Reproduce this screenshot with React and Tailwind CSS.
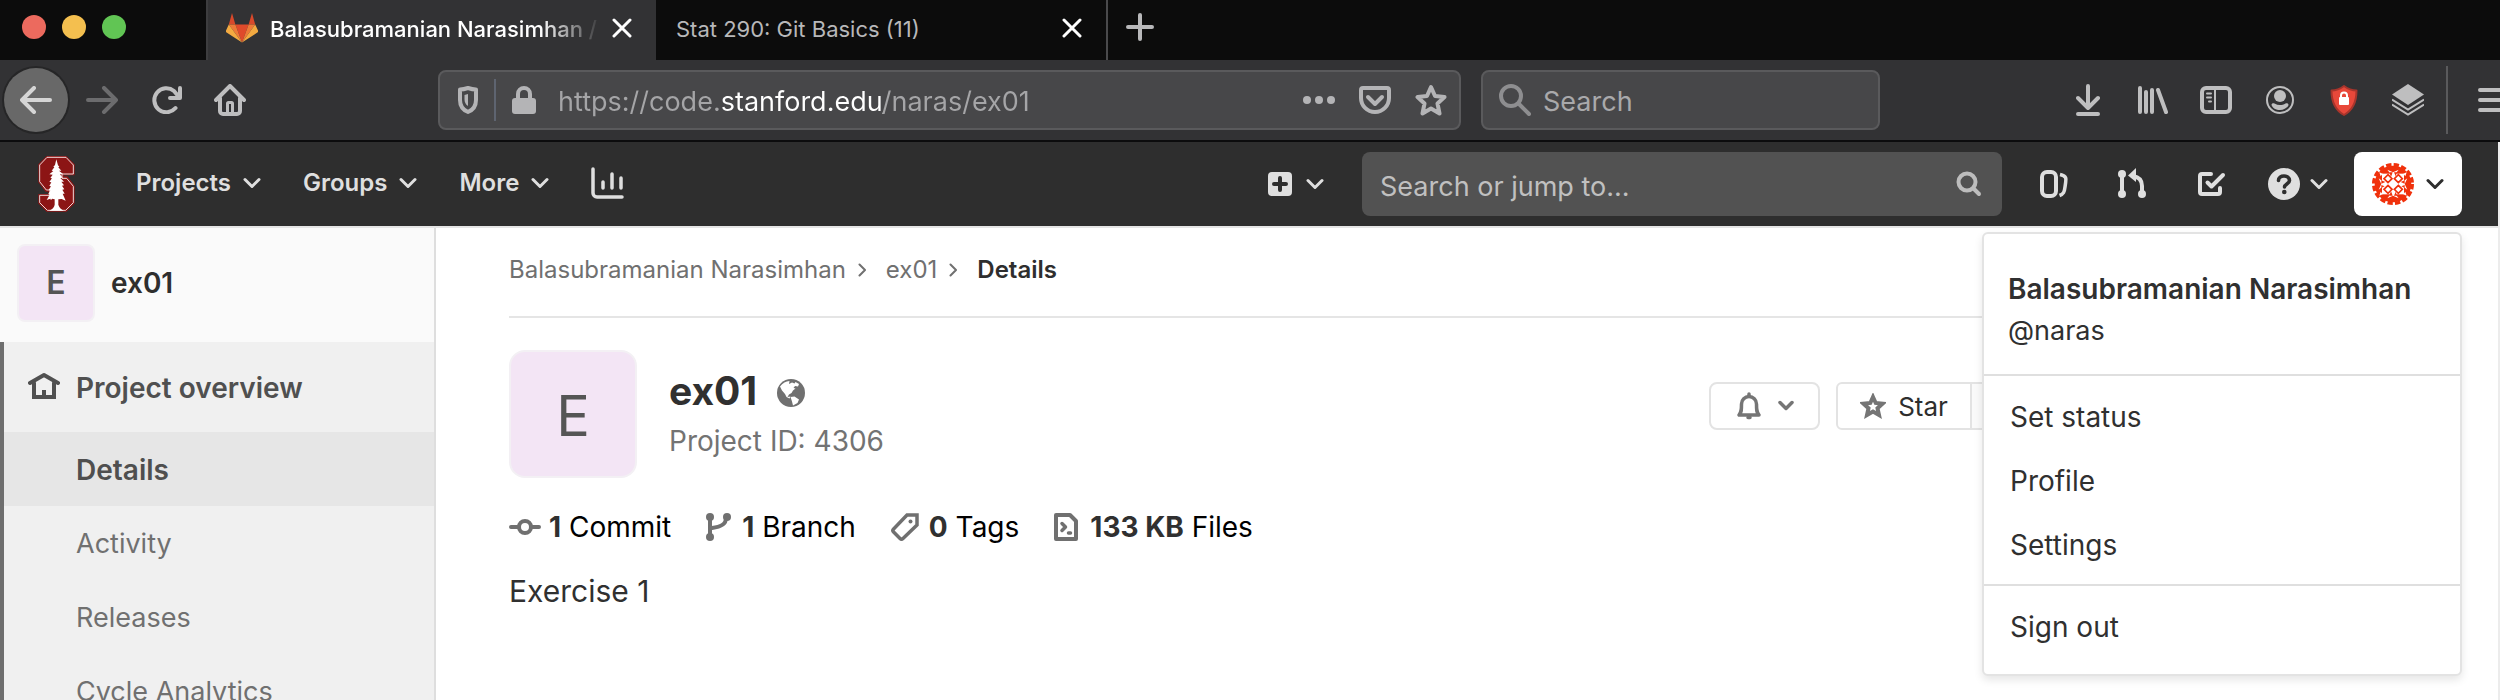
import { Fragment } from "react";

function Icon({ w = 32, h = 32, sw = 4, className = "", children }) {
  return (
    <svg
      width={w}
      height={h}
      viewBox={`0 0 ${w} ${h}`}
      fill="none"
      stroke="currentColor"
      strokeWidth={sw}
      strokeLinecap="round"
      strokeLinejoin="round"
      aria-hidden="true"
      className={`shrink-0 ${className}`}
    >
      {children}
    </svg>
  );
}

const Chevron = ({ className = "" }) => (
  <Icon w={18} h={12} sw={3} className={className}>
    <path d="M2 2.5 9 9.5 16 2.5" />
  </Icon>
);

const Close = () => (
  <Icon w={20} h={20} sw={3}>
    <path d="M2 2 18 18M18 2 2 18" />
  </Icon>
);

const Fox = () => (
  <Icon w={32} h={30} sw={0}>
    <path d="M6 0 2.8 11.5h6.6zM26 0l-3.4 11.5h6.6z" fill="#d8492b" />
    <path d="M9.4 11.5h13.2L16 29.5z" fill="#df4a2b" />
    <path d="M2.8 11.5h6.6L16 29.5zM29.2 11.5h-6.6L16 29.5z" fill="#ee7a38" />
    <path d="M2.8 11.5 0 17.6c-.2.8 0 1.6.6 2L16 29.5zM29.2 11.5l2.8 6.1c.2.8 0 1.6-.6 2L16 29.5z" fill="#f3aa41" />
  </Icon>
);

const StanfordLogo = () => (
  <svg width="37" height="56" viewBox="0 0 111 168" aria-hidden="true">
    <path
      d="M27 3H84L107 26V55H75V64H87L107 90V141L84 164H27L4 141V117H34V104H24L4 78V26Z"
      fill="#8c1515"
      stroke="#8c1515"
      strokeWidth="6"
    />
    <path
      d="M27 4H84L106 27V54H72V67H86L106 91V140L83 163H28L5 140V118H36V102H25L5 77V27Z"
      fill="#8c1515"
      stroke="#fff"
      strokeWidth="2.5"
    />
    <path
      d="M55 10 60 28 64 32 61 34 70 44 63 44 75 54 66 55 74 65 67 66 78 77 70 77 78 88 72 89 79 100 73 101 80 113 74 113 83 134 71 129 61 130 61 146C63 154 69 159 77 164H34C43 159 49 154 50 146L50 130 42 128 39 133 37 128 26 132 35 116 31 114 37 103 32 102 39 91 34 90 40 79 34 78 42 67 37 66 44 56 34 55 46 45 41 44 49 34 46 32 51 27Z"
      fill="#fff"
    />
  </svg>
);

const Avatar = () => (
  <svg width="42" height="42" viewBox="0 0 126 126" aria-hidden="true">
    <circle cx="63" cy="63" r="55" fill="#f0310c" />
    <circle cx="63" cy="63" r="58" fill="none" stroke="#f0310c" strokeWidth="10" strokeDasharray="16 6.8" />
    <path d="M30 32H96V94H30Z" fill="#fff" />
    <path d="M63 42 46 20l17 8 17-8zM63 84 46 106l17-8 17 8zM42 63 20 46l8 17-8 17zM84 63l22-17-8 17 8 17z" fill="#fff" />
    <path d="M22 28l4 12 6-8zM104 28l-4 12-6-8zM22 98l4-12 6 8zM104 98l-4-12-6 8z" fill="#fff" />
    <g fill="#fff" stroke="#f0310c" strokeWidth="5">
      <path d="M48 35 60 47 48 59 36 47zM79 35 91 47 79 59 67 47zM48 67 60 79 48 91 36 79zM79 67 91 79 79 91 67 79z" />
    </g>
    <path d="M52 28l5 14 5-14zM66 28l5 12 4-12zM52 98l5-14 5 14zM66 98l5-12 4 12zM28 52l12 5-12 5zM98 52l-12 5 12 5zM28 66l10 4-10 5zM98 66l-10 4 10 5z" fill="#f0310c" />
  </svg>
);

const toolbarIcons = [
  {
    label: "Downloads",
    gap: "",
    icon: (
      <Icon w={24} h={32}>
        <path d="M12 2V24M2 14 12 24 22 14M2 30H22" />
      </Icon>
    ),
  },
  {
    label: "Library",
    gap: "ml-[38px]",
    icon: (
      <Icon w={30} h={28}>
        <path d="M2 2V26M8 6V26M14 4V26M20 4 28 26" />
      </Icon>
    ),
  },
  {
    label: "Sidebars",
    gap: "ml-8",
    icon: (
      <Icon w={32} h={28}>
        <rect x="2" y="2" width="28" height="24" rx="4" />
        <path d="M15 3V25M7 7.500H11M7 11.500H11M9 15.500H11" strokeWidth="2" />
      </Icon>
    ),
  },
  {
    label: "Account",
    gap: "ml-[34px]",
    icon: (
      <Icon w={28} h={28} sw={2}>
        <circle cx="14" cy="14" r="13" />
        <circle cx="14" cy="10" r="6" fill="currentColor" stroke="none" />
        <path d="M5.500 19c0-1.500 1.500-2.200 3-1.500 3.500 2 7.500 2 11 0 1.500-.7 3 0 3 1.500-1 3-4.500 5-8.500 5s-7.500-2-8.500-5z" fill="currentColor" stroke="none" />
      </Icon>
    ),
  },
  {
    label: "Tracker protection",
    gap: "ml-9",
    icon: (
      <Icon w={28} h={32} sw={2}>
        <path d="M14 2C10 5 6 6.500 1.500 6.500 1.500 18 5 26 14 31 23 26 26.500 18 26.500 6.500 22 6.500 18 5 14 2Z" fill="#e8483a" stroke="#a8352c" />
        <rect x="9" y="13" width="10" height="8" rx="1" fill="#fff" stroke="none" />
        <path d="M11 13V11.500a3 3 0 0 1 6 0V13" stroke="#fff" />
      </Icon>
    ),
  },
  {
    label: "Layers",
    gap: "ml-[34px]",
    icon: (
      <Icon w={32} h={32} sw={0}>
        <path d="M16 0 32 10.500 16 21 0 10.500Z" fill="currentColor" />
        <path d="M0 15.500 16 25.500 32 15.500M0 20.500 16 30.500 32 20.500" strokeWidth="2" strokeLinecap="butt" strokeLinejoin="miter" />
      </Icon>
    ),
  },
];

const headerMenus = [
  { label: "Projects", gap: "ml-[61px]" },
  { label: "Groups", gap: "ml-[42px]" },
  { label: "More", gap: "ml-[42px]" },
];

const headerTools = [
  {
    label: "Issues",
    gap: "ml-[38px]",
    icon: (
      <Icon w={28} h={28}>
        <rect x="2" y="2" width="14" height="24" rx="5" />
        <path d="M20 4.500C27 6 26.500 8 25 17c-.6 5-1.500 7-5.500 8.500" strokeWidth="3.500" strokeLinecap="butt" />
      </Icon>
    ),
  },
  {
    label: "Merge requests",
    gap: "ml-[50px]",
    icon: (
      <Icon w={28} h={32}>
        <path d="M4 8V26M24 26V18C24 12 21 9 15 8" />
        <path d="M18 0V14L10 7.500Z" fill="currentColor" stroke="none" />
        <circle cx="4" cy="6" r="4" fill="currentColor" stroke="none" />
        <circle cx="4" cy="26" r="4" fill="currentColor" stroke="none" />
        <circle cx="24" cy="26" r="4" fill="currentColor" stroke="none" />
      </Icon>
    ),
  },
  {
    label: "To-Do List",
    gap: "ml-[52px]",
    icon: (
      <Icon w={28} h={24}>
        <path d="M13 2H4a2 2 0 0 0-2 2V20a2 2 0 0 0 2 2H20a2 2 0 0 0 2-2V16" />
        <path d="M9.500 10.500 13.500 14.500 25 3" />
      </Icon>
    ),
  },
];

const sidebarLinks = ["Details", "Activity", "Releases", "Cycle Analytics"];

const stats = [
  {
    count: "1",
    label: "Commit",
    icon: (
      <Icon w={32} h={20}>
        <path d="M2 10H9M23 10H30" />
        <circle cx="16" cy="10" r="6" />
      </Icon>
    ),
    gap: "gap-2",
  },
  {
    count: "1",
    label: "Branch",
    icon: (
      <Icon w={26} h={28}>
        <path d="M4 4V24M20 5C20 12 14 14 6 15" />
        <circle cx="4" cy="4" r="4" fill="currentColor" stroke="none" />
        <circle cx="4" cy="24" r="4" fill="currentColor" stroke="none" />
        <circle cx="21" cy="4" r="4" fill="currentColor" stroke="none" />
      </Icon>
    ),
    gap: "gap-2.5",
  },
  {
    count: "0",
    label: "Tags",
    icon: (
      <Icon w={28} h={28} sw={3.5}>
        <path d="M16 2H26V12L12 25.500C11 26.400 10 26.400 9 25.500L2.600 19C1.600 18 1.600 17 2.600 16Z" strokeLinejoin="miter" />
        <circle cx="19.500" cy="8.500" r="2" fill="currentColor" stroke="none" />
      </Icon>
    ),
    gap: "gap-2.5",
  },
  {
    count: "133 KB",
    label: "Files",
    icon: (
      <Icon w={24} h={28}>
        <path d="M2 2H16L22 8V26H2Z" />
        <path d="M8 10.500 11.500 14 8 17.500M14.500 20H16.500" strokeWidth="3.500" />
      </Icon>
    ),
    gap: "gap-3",
  },
];

function TabStrip() {
  return (
    <div className="flex h-15 items-stretch bg-[#0c0c0c]">
      <div className="flex w-[206px] shrink-0 items-start gap-4 pt-[15px] pl-[22px]">
        <button aria-label="Close window" className="size-6 rounded-full bg-[#ec6a5e]" />
        <button aria-label="Minimise window" className="size-6 rounded-full bg-[#f4bf4f]" />
        <button aria-label="Zoom window" className="size-6 rounded-full bg-[#61c554]" />
      </div>
      <div className="flex w-[450px] shrink-0 items-center border-l-2 border-[#3d3d3f] bg-[#323234] pr-6 pb-1 pl-[18px] text-white">
        <Fox />
        <span className="ml-3 flex-1 overflow-hidden pt-0.5 text-[22px] font-medium whitespace-nowrap [mask-image:linear-gradient(90deg,#000_270px,transparent_332px)]">
          Balasubramanian Narasimhan / ex01
        </span>
        <button aria-label="Close tab" className="ml-2">
          <Close />
        </button>
      </div>
      <div className="flex w-[452px] shrink-0 items-center border-r-2 border-[#4a4a4c] pr-6 pb-1 pl-5">
        <span className="flex-1 pt-0.5 text-[22px] text-[#b8b8ba]">Stat 290: Git Basics (11)</span>
        <button aria-label="Close tab" className="text-white">
          <Close />
        </button>
      </div>
      <button aria-label="New tab" className="ml-[18px] self-center pb-1.5 text-[#b8b8ba]">
        <Icon w={28} h={28}>
          <path d="M14 2V26M2 14H26" />
        </Icon>
      </button>
    </div>
  );
}

function NavBar() {
  return (
    <div className="flex h-[82px] items-center overflow-hidden border-b-2 border-[#0c0c0d] bg-[#323234] text-[#bebebf]">
      <button aria-label="Back" className="ml-1 grid size-16 shrink-0 place-items-center rounded-full bg-[#686868] text-[#d6d6d6] ring-2 ring-[#262627]">
        <Icon w={32} h={28}>
          <path d="M30 14H2M14 2 2 14 14 26" />
        </Icon>
      </button>
      <button aria-label="Forward" className="ml-[18px] text-[#6c6c6e]">
        <Icon w={32} h={28}>
          <path d="M2 14H30M18 2 30 14 18 26" />
        </Icon>
      </button>
      <button aria-label="Reload" className="ml-[34px]">
        <Icon w={30} h={28}>
          <path d="M23.500 22A12 12 0 1 1 22 5L27 11M28 2V12H18" />
        </Icon>
      </button>
      <button aria-label="Home" className="ml-8">
        <Icon w={32} h={32}>
          <path d="M2 16 16 2 30 16M6 14V27a3 3 0 0 0 3 3H23a3 3 0 0 0 3-3V14" />
          <path d="M13.500 28V19.500a1 1 0 0 1 1-1h3a1 1 0 0 1 1 1V28" strokeWidth="3" />
        </Icon>
      </button>

      <div className="ml-48 flex h-15 min-w-0 flex-1 items-center rounded-lg border-2 border-[#5a5a5c] bg-[#474749] pr-4 pl-[18px] text-[#b4b4b6]">
        <Icon w={20} h={28}>
          <path d="M10 2C7 3 4.500 3.500 2 3.500V14C2 20 5 24 10 26 15 24 18 20 18 14V3.500C15.500 3.500 13 3 10 2Z" />
          <path d="M10 8V20C7.500 18.500 6.500 16 6.500 13V9Z" fill="currentColor" stroke="none" />
        </Icon>
        <span className="mx-4 h-[42px] w-0.5 bg-[#5e6470]" />
        <Icon w={24} h={28}>
          <rect x="0" y="12" width="24" height="16" rx="3" fill="currentColor" stroke="none" />
          <path d="M6 13V8a6 6 0 0 1 12 0V13" />
        </Icon>
        <input
          aria-label="Address"
          type="text"
          defaultValue="https://code.stanford.edu/naras/ex01"
          className="ml-[22px] h-11 min-w-0 flex-1 bg-[linear-gradient(90deg,#a5a5a7_162px,#ffffff_162px,#ffffff_325px,#a5a5a7_325px)] bg-clip-text pt-0.5 text-[27px] text-transparent outline-none"
        />
        <button aria-label="Page actions">
          <Icon w={32} h={8} sw={0}>
            <g fill="currentColor">
              <circle cx="4" cy="4" r="4" />
              <circle cx="16" cy="4" r="4" />
              <circle cx="28" cy="4" r="4" />
            </g>
          </Icon>
        </button>
        <button aria-label="Save to Pocket" className="ml-6">
          <Icon w={32} h={28}>
            <path d="M4 2H28a2 2 0 0 1 2 2V12A14 14 0 0 1 2 12V4A2 2 0 0 1 4 2Z" />
            <path d="M9 11 16 18 23 11" />
          </Icon>
        </button>
        <button aria-label="Bookmark this page" className="ml-6 -mr-1">
          <Icon w={32} h={32}>
            <path d="M16 3 20 12 29.500 13 22.500 19.500 24.500 29.500 16 24.500 7.500 29.500 9.500 19.500 2.500 13 12 12Z" />
          </Icon>
        </button>
      </div>

      <label className="ml-5 flex h-15 w-[399px] shrink-0 items-center rounded-lg border-2 border-[#5a5a5c] bg-[#474749] px-4 text-[#8e8e90]">
        <Icon w={32} h={32}>
          <circle cx="12" cy="12" r="10" />
          <path d="M19.500 19.500 30 30" />
        </Icon>
        <input
          aria-label="Search the web"
          type="text"
          placeholder="Search"
          className="ml-3 h-11 min-w-0 flex-1 bg-transparent pt-0.5 text-[27px] outline-none placeholder:text-[#a9a9ab]"
        />
      </label>

      <div className="ml-[196px] flex shrink-0 items-center">
        {toolbarIcons.map((t) => (
          <button key={t.label} aria-label={t.label} className={t.gap}>
            {t.icon}
          </button>
        ))}
        <span className="ml-[22px] h-[68px] w-0.5 bg-[#5a5a5c]" />
        <button aria-label="Open menu" className="-mr-2.5 ml-[30px]">
          <Icon w={32} h={24}>
            <path d="M2 2H30M2 12H30M2 22H30" />
          </Icon>
        </button>
      </div>
    </div>
  );
}

function UserMenu() {
  return (
    <div className="absolute top-full right-0 z-10 mt-4 w-[480px] rounded-md border-2 border-[#e3e3e3] bg-white pb-4 text-[28px] text-[#303030] shadow-[0_4px_8px_rgba(0,0,0,0.1)]">
      <div className="border-b-2 border-[#dfdfdf] px-6 pt-[34px] pb-[22px] leading-[42px]">
        <p className="font-semibold whitespace-nowrap">Balasubramanian Narasimhan</p>
        <p className="text-[27px]">@naras</p>
      </div>
      <ul className="border-b-2 border-[#dfdfdf] py-2">
        {["Set status", "Profile", "Settings"].map((t) => (
          <li key={t}>
            <a href="#" className="block px-[26px] pt-0.5 leading-[62px]">{t}</a>
          </li>
        ))}
      </ul>
      <a href="#" className="mt-2 block px-[26px] pt-0.5 leading-[62px]">Sign out</a>
    </div>
  );
}

function SiteHeader() {
  return (
    <header className="flex h-[86px] shrink-0 items-center border-b-2 border-[#e5e5e5] bg-[#2e2e2e] pr-9 pl-[38px] text-[#dfdfdf]">
      <a href="#" aria-label="Dashboard">
        <StanfordLogo />
      </a>
      <nav className="flex items-center pb-0.5 text-2xl font-semibold">
        {headerMenus.map((m) => (
          <button key={m.label} className={`flex items-center gap-3 ${m.gap}`}>
            {m.label}
            <Chevron />
          </button>
        ))}
        <a href="#" aria-label="Charts" className="ml-[42px]">
          <Icon w={34} h={32} sw={3.5}>
            <path d="M2 2V26a4 4 0 0 0 4 4H31M12 15V21M21 7V21M30 11V21" />
          </Icon>
        </a>
      </nav>

      <button aria-label="New" className="ml-auto flex items-center gap-3.5">
        <svg width="24" height="24" viewBox="0 0 24 24" aria-hidden="true">
          <rect width="24" height="24" rx="4" fill="currentColor" />
          <path d="M12 6V18M6 12H18" stroke="#2e2e2e" strokeWidth="4" strokeLinecap="round" />
        </svg>
        <Chevron />
      </button>
      <label className="ml-[38px] flex h-16 w-[640px] items-center rounded-lg bg-[#525252] px-[18px] text-[#bdbdbd]">
        <input
          aria-label="Search or jump to"
          type="text"
          placeholder="Search or jump to..."
          className="h-12 min-w-0 flex-1 bg-transparent pt-1 text-[27px] outline-none placeholder:text-[#c0c0c0]"
        />
        <Icon w={28} h={26}>
          <circle cx="11" cy="11" r="8.500" />
          <path d="M17.500 17.500 23 23" />
        </Icon>
      </label>
      {headerTools.map((t) => (
        <a key={t.label} href="#" aria-label={t.label} className={t.gap}>
          {t.icon}
        </a>
      ))}
      <button aria-label="Help" className="ml-[42px] flex items-center gap-2.5">
        <svg width="32" height="32" viewBox="0 0 32 32" aria-hidden="true">
          <circle cx="16" cy="16" r="16" fill="currentColor" />
          <path d="M10.500 12.500C10.500 9.500 13 8 16 8s5.500 1.700 5.500 4.500c0 3.300-5 3.600-5 6.500" fill="none" stroke="#2e2e2e" strokeWidth="3.600" strokeLinecap="round" />
          <circle cx="16.300" cy="24" r="2.300" fill="#2e2e2e" />
        </svg>
        <Chevron />
      </button>
      <div className="relative ml-[26px]">
        <button aria-label="Account menu" aria-expanded="true" className="flex h-16 w-[108px] items-center justify-center gap-3 rounded-lg bg-white text-[#2e2e2e]">
          <Avatar />
          <Chevron />
        </button>
        <UserMenu />
      </div>
    </header>
  );
}

function Sidebar() {
  return (
    <aside className="w-[436px] shrink-0 overflow-hidden border-r-2 border-[#dedede] bg-[#fafafa]">
      <a href="#" className="flex h-[114px] items-start gap-4 pt-4 pl-[17px]">
        <span className="grid size-[78px] place-items-center rounded-lg border-2 border-[#f3f0f4] bg-[#f3e5f5] text-[32px] font-semibold text-[#555]">E</span>
        <span className="text-[28px] leading-[78px] font-semibold text-[#2e2e2e]">ex01</span>
      </a>
      <nav className="h-full border-l-4 border-[#6e6e6e] bg-[#f0f0f0]">
        <a href="#" className="flex h-[90px] items-center gap-4 pt-0.5 pl-6 text-[28px] font-semibold text-[#505050]">
          <Icon w={32} h={28} sw={3.5} className="mb-1">
            <path d="M2 11 16 3 30 11" strokeWidth="4" />
            <path d="M6 11V25H26V11" strokeLinejoin="miter" strokeWidth="4" />
            <path d="M16 18V25" strokeLinecap="butt" strokeWidth="4" />
          </Icon>
          Project overview
        </a>
        <ul>
          {sidebarLinks.map((t, i) => (
            <li key={t}>
              <a
                href="#"
                className={`block pt-0.5 pl-[72px] leading-[72px] ${i === 0 ? "bg-[#e6e6e6] text-[28px] font-semibold text-[#4f4f4f]" : "text-[27px] text-[#707070]"}`}
              >
                {t}
              </a>
            </li>
          ))}
        </ul>
      </nav>
    </aside>
  );
}

function Project() {
  return (
    <main className="min-w-0 flex-1 px-[73px]">
      <nav aria-label="Breadcrumb" className="flex h-[90px] items-center border-b-2 border-[#e5e5e5] pb-1 text-2xl text-[#707070]">
        {["Balasubramanian Narasimhan", "ex01"].map((t) => (
          <Fragment key={t}>
            <a href="#">{t}</a>
            <Icon w={8} h={14} sw={2} className="mr-5 ml-3">
              <path d="M1.500 1.500 7 7 1.500 12.500" />
            </Icon>
          </Fragment>
        ))}
        <span className="font-semibold text-[#2e2e2e]">Details</span>
      </nav>

      <section className="mt-8 flex items-center gap-8">
        <div className="grid size-32 place-items-center rounded-2xl border-2 border-[#f3f0f4] bg-[#f3e5f5] pt-1 text-[56px] text-[#555]">E</div>
        <div className="pt-0.5">
          <h1 className="flex items-center gap-5 text-[39px] leading-[52px] font-bold text-[#303030]">
            ex01
            <svg width="28" height="28" viewBox="0 0 28 28" className="mt-1" aria-hidden="true">
              <circle cx="14" cy="14" r="14" fill="#707070" />
              <path d="M3 7.500C5.500 4 9 2.200 12.500 2l-.5 3 3-1.500 2.500 1 1-1.500 3.500 2-1 2.500-3-.5-1.500 2 2 .5-2.500 2-1.500 2.500-2.500 1.500-1.500 2.500 3-.5-1 2-3-1.500-1.500-3-3-3.500z" fill="#fff" />
              <path d="M13.500 18l4-.5 4.500 3-1.500 3.500-4.500 2.500-1-4z" fill="#fff" />
            </svg>
          </h1>
          <p className="text-[28px] leading-12 text-[#737373]">Project ID: 4306</p>
        </div>
        <div className="ml-auto flex items-center gap-4 pr-[393px] pb-4">
          <button aria-label="Notification setting" className="flex h-12 w-[111px] items-center justify-center gap-4 rounded-lg border-2 border-[#e3e3e3] text-[#757575]">
            <Icon w={26} h={28} sw={3.5}>
              <path d="M3 23H23C20.500 20.500 20.500 18 20.500 12A7.500 7.500 0 0 0 5.500 12C5.500 18 5.500 20.500 3 23Z" />
              <path d="M13 2V4M12 25.500H14" />
            </Icon>
            <Icon w={16} h={12} sw={3.5}>
              <path d="M2 2.500 8 8.500 14 2.500" />
            </Icon>
          </button>
          <div className="flex h-12 items-stretch overflow-hidden rounded-md border-2 border-[#e3e3e3] text-[26px] text-[#2e2e2e]">
            <button className="flex w-[132px] items-center justify-center gap-3">
              <Icon w={26} h={26} sw={4} className="text-[#757575]">
                <path d="M13 4 15.700 10 22.500 10.700 17.500 15.200 19 22 13 18.500 7 22 8.500 15.200 3.500 10.700 10.300 10Z" strokeLinejoin="miter" />
              </Icon>
              Star
            </button>
            <a href="#" aria-label="Stargazers" className="w-[60px] border-l-2 border-[#e3e3e3] bg-[#fafafa]" />
          </div>
        </div>
      </section>

      <ul className="mt-[29px] flex gap-[35px] text-[28px] leading-10 text-black">
        {stats.map((s) => (
          <li key={s.label}>
            <a href="#" className={`flex items-center whitespace-pre ${s.gap}`}>
              <span className="text-[#707070]">{s.icon}</span>
              <span>
                <strong className="font-bold text-[#303030]">{s.count}</strong> {s.label}
              </span>
            </a>
          </li>
        ))}
      </ul>
      <p className="mt-6 text-[30px] leading-10 text-[#303030]">Exercise 1</p>
    </main>
  );
}

export default function App() {
  return (
    <div className="flex h-screen min-w-[1900px] flex-col overflow-hidden bg-white font-[Inter,'Liberation_Sans',sans-serif]">
      <div className="shrink-0">
        <TabStrip />
        <NavBar />
      </div>
      <div className="flex min-h-0 flex-1 flex-col border-r-2 border-[#ececec]">
        <SiteHeader />
        <div className="flex min-h-0 flex-1">
          <Sidebar />
          <Project />
        </div>
      </div>
    </div>
  );
}
